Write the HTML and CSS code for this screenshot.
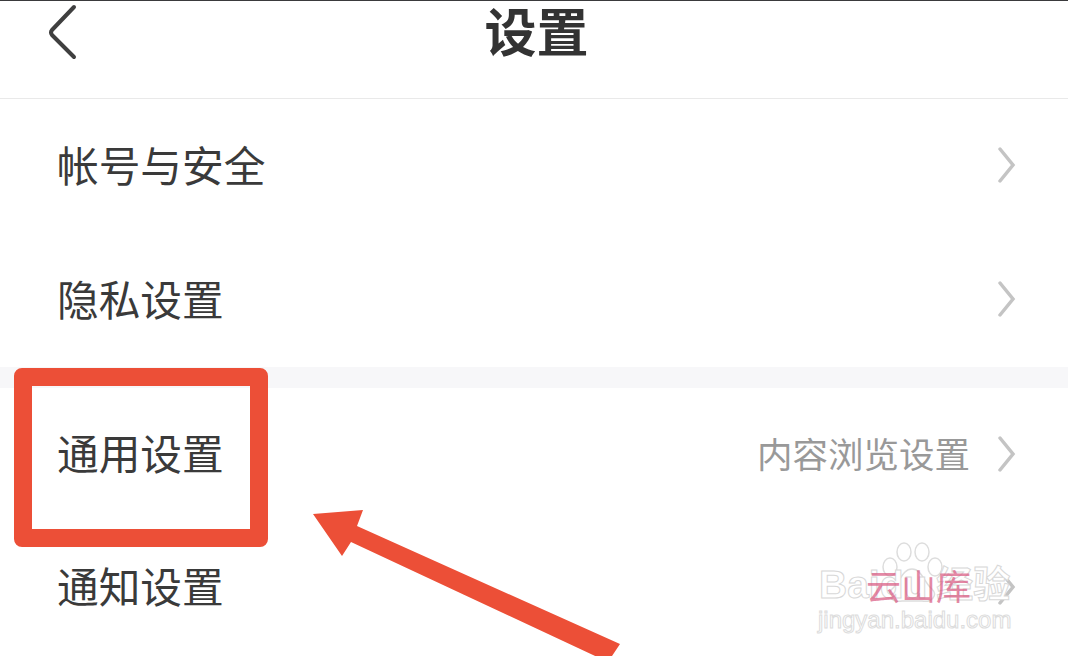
FILE: index.html
```html
<!DOCTYPE html>
<html lang="zh-CN">
<head>
  <meta charset="UTF-8" />
  <title>设置</title>
  <link rel="stylesheet" href="styles.css">
</head>
<body>
  <div class="screen">

    <!-- Header -->
    <div class="header">
      <svg class="back" width="34" height="60" viewBox="0 0 34 60">
        <path d="M28 6 L6 29 Q4 31.5 6 34 L28 56" />
      </svg>
      <h1>设置</h1>
    </div>

    <!-- First group -->
    <div class="row">
      <span class="label">帐号与安全</span>
      <svg class="chevron" width="18" height="36" viewBox="0 0 18 36"><path d="M2 2 L15 18 L2 34" /></svg>
    </div>
    <div class="row">
      <span class="label">隐私设置</span>
      <svg class="chevron" width="18" height="36" viewBox="0 0 18 36"><path d="M2 2 L15 18 L2 34" /></svg>
    </div>

    <div class="gap"></div>

    <!-- Second group -->
    <div class="row row-low">
      <span class="label">通用设置</span>
      <span class="value">内容浏览设置</span>
      <svg class="chevron" width="18" height="36" viewBox="0 0 18 36"><path d="M2 2 L15 18 L2 34" /></svg>
    </div>
    <div class="row row-low">
      <span class="label">通知设置</span>
      <svg class="chevron" width="18" height="36" viewBox="0 0 18 36"><path d="M2 2 L15 18 L2 34" /></svg>
    </div>

    <!-- Red annotation -->
    <div class="mark-box"></div>
    <svg class="mark-arrow" width="320" height="160" viewBox="0 0 320 160">
      <polygon points="3,17 53,13 47,29 310,147 298,165 41,45 32,59" />
    </svg>

    <!-- Watermark -->
    <div class="watermark">
      <svg class="paw" width="64" height="62" viewBox="0 0 64 62">
        <ellipse cx="24" cy="11" rx="7" ry="9" />
        <ellipse cx="42" cy="11" rx="7" ry="9" />
        <ellipse cx="10" cy="26" rx="7" ry="9" />
        <ellipse cx="55" cy="26" rx="7" ry="9" />
        <path d="M32 28 C22 28 20 42 12 48 C6 54 12 62 22 60 L42 60 C52 62 58 54 52 48 C44 42 42 28 32 28 Z" />
      </svg>
      <div class="wm-name">Baidu<span class="wm-cn">经验</span></div>
      <div class="wm-pink">云山库</div>
      <div class="wm-url">jingyan.baidu.com</div>
    </div>

  </div>
</body>
</html>
```

FILE: styles.css
```css
* {
  box-sizing: border-box;
}

body {
  margin: 0;
  background: #ffffff;
  font-family: "Noto Sans CJK SC", "Liberation Sans", sans-serif;
  overflow: hidden;
}

.screen {
  position: relative;
  width: 1068px;
  height: 656px;
  overflow: hidden;
  border-top: 1px solid #3a3a3c;
}

/* Header */
.header {
  position: relative;
  height: 98px;
  border-bottom: 1px solid #e9e9e9;
  display: flex;
  justify-content: center;
  padding-left: 5px;
}

.header h1 {
  margin: 0;
  font-size: 52px;
  line-height: 58px;
  font-weight: 700;
  color: #333333;
}

.back {
  position: absolute;
  left: 46px;
  top: 0;
}

.back path {
  fill: none;
  stroke: #3f3f3f;
  stroke-width: 4;
  stroke-linecap: round;
  stroke-linejoin: round;
}

/* Rows */
.row {
  height: 134px;
  display: flex;
  align-items: center;
  padding: 0 52px 0 57px;
}

.row-low {
  height: 133px;
}

.label {
  flex: 1;
  font-size: 41.7px;
  color: #3a3a3a;
  margin-bottom: 5px;
}

.value {
  font-size: 35.5px;
  color: #999999;
  margin-right: 28px;
  margin-bottom: 5px;
}

.chevron {
  margin-bottom: 2px;
}

.chevron path {
  fill: none;
  stroke: #c4c4c4;
  stroke-width: 3.5;
  stroke-linecap: round;
}

.gap {
  height: 21px;
  background: #f7f7f9;
}

/* Red annotation */
.mark-box {
  position: absolute;
  left: 14px;
  top: 367px;
  width: 254px;
  height: 179px;
  border: 18px solid #ec4f37;
  border-radius: 8px;
}

.mark-arrow {
  position: absolute;
  left: 310px;
  top: 496px;
}

.mark-arrow polygon {
  fill: #ec4f37;
}

/* Watermark */
.watermark {
  position: absolute;
  left: 818px;
  top: 540px;
  width: 196px;
  height: 96px;
}

.paw {
  position: absolute;
  left: 62px;
  top: 0;
}

.paw ellipse,
.paw path {
  fill: #ffffff;
  fill-opacity: 0.5;
  stroke: #dddddd;
  stroke-width: 1.5;
}

.wm-name {
  position: absolute;
  left: 1px;
  top: 22px;
  font-family: "Liberation Sans", "Noto Sans CJK SC", sans-serif;
  font-size: 39px;
  line-height: 44px;
  font-weight: 700;
  white-space: nowrap;
  color: #ffffff;
  -webkit-text-stroke: 1px #d8d8d8;
}

.wm-cn {
  margin-left: 9px;
  font-size: 37px;
}

.wm-pink {
  position: absolute;
  left: 48px;
  top: 22px;
  font-size: 35px;
  line-height: 44px;
  white-space: nowrap;
  color: #d9577f;
  opacity: 0.7;
}

.wm-url {
  position: absolute;
  left: 0;
  top: 65px;
  font-family: "Liberation Sans", sans-serif;
  font-size: 24px;
  line-height: 28px;
  white-space: nowrap;
  color: #ffffff;
  -webkit-text-stroke: 1px #dcdcdc;
}
```
